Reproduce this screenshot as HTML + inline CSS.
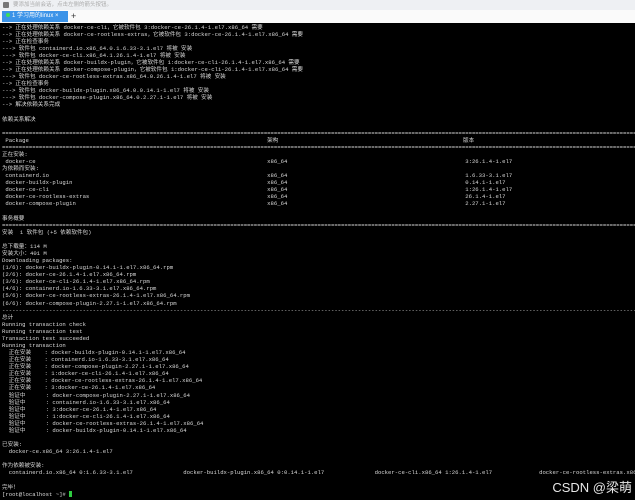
<!DOCTYPE html>
<html><head><meta charset="utf-8"><style>
html,body{margin:0;padding:0;width:635px;height:500px;overflow:hidden;background:#000;}
.top{position:absolute;left:0;top:0;width:635px;height:10px;background:#eef0f3;}
.top .ic{position:absolute;left:3px;top:2px;width:6px;height:6px;background:#777;border-radius:1px;}
.top .t{position:absolute;left:13px;top:1px;font:5.5px "Liberation Sans","Noto Sans CJK SC",sans-serif;color:#aaa;line-height:8px;white-space:nowrap;}
.tabs{position:absolute;left:0;top:10px;width:635px;height:13px;background:#fafafa;}
.tab{position:absolute;left:2px;top:1px;width:66px;height:11px;background:#3b93e8;color:#fff;font:6px "Liberation Sans","Noto Sans CJK SC",sans-serif;line-height:11px;white-space:nowrap;}
.tab .d{display:inline-block;width:4px;height:4px;border-radius:50%;background:#3ddc5a;margin:0 2px 0 4px;vertical-align:middle;}
.plus{position:absolute;left:71px;top:10px;font:9px "Liberation Sans",sans-serif;color:#333;line-height:13px;}
pre{position:absolute;left:2px;top:23.5px;margin:0;font-family:"Liberation Mono","Noto Sans CJK SC",monospace;font-size:5.6px;line-height:7.08px;color:#d8d8d8;white-space:pre;}
.cur{display:inline-block;width:3px;height:6px;background:#2ecc40;vertical-align:middle;}
.wm{position:absolute;right:3px;bottom:4px;font:13px "Liberation Sans","Noto Sans CJK SC",sans-serif;color:#e6e6e6;}
</style></head><body>
<div class="top"><div class="ic"></div><div class="t">要添加当前会话，点击左侧的箭头按钮。</div></div>
<div class="tabs"><div class="tab"><span class="d"></span>1 学习用的linux ×</div></div>
<div class="plus">+</div>
<pre>--&gt; 正在处理依赖关系 docker-ce-cli，它被软件包 3:docker-ce-26.1.4-1.el7.x86_64 需要
--&gt; 正在处理依赖关系 docker-ce-rootless-extras，它被软件包 3:docker-ce-26.1.4-1.el7.x86_64 需要
--&gt; 正在检查事务
---&gt; 软件包 containerd.io.x86_64.0.1.6.33-3.1.el7 将被 安装
---&gt; 软件包 docker-ce-cli.x86_64.1.26.1.4-1.el7 将被 安装
--&gt; 正在处理依赖关系 docker-buildx-plugin，它被软件包 1:docker-ce-cli-26.1.4-1.el7.x86_64 需要
--&gt; 正在处理依赖关系 docker-compose-plugin，它被软件包 1:docker-ce-cli-26.1.4-1.el7.x86_64 需要
---&gt; 软件包 docker-ce-rootless-extras.x86_64.0.26.1.4-1.el7 将被 安装
--&gt; 正在检查事务
---&gt; 软件包 docker-buildx-plugin.x86_64.0.0.14.1-1.el7 将被 安装
---&gt; 软件包 docker-compose-plugin.x86_64.0.2.27.1-1.el7 将被 安装
--&gt; 解决依赖关系完成

依赖关系解决

==============================================================================================================================================================================================
 Package                                                                       架构                                                       版本
==============================================================================================================================================================================================
正在安装:
 docker-ce                                                                     x86_64                                                     3:26.1.4-1.el7
为依赖而安装:
 containerd.io                                                                 x86_64                                                     1.6.33-3.1.el7
 docker-buildx-plugin                                                          x86_64                                                     0.14.1-1.el7
 docker-ce-cli                                                                 x86_64                                                     1:26.1.4-1.el7
 docker-ce-rootless-extras                                                     x86_64                                                     26.1.4-1.el7
 docker-compose-plugin                                                         x86_64                                                     2.27.1-1.el7

事务概要
==============================================================================================================================================================================================
安装  1 软件包 (+5 依赖软件包)

总下载量：114 M
安装大小：401 M
Downloading packages:
(1/6): docker-buildx-plugin-0.14.1-1.el7.x86_64.rpm
(2/6): docker-ce-26.1.4-1.el7.x86_64.rpm
(3/6): docker-ce-cli-26.1.4-1.el7.x86_64.rpm
(4/6): containerd.io-1.6.33-3.1.el7.x86_64.rpm
(5/6): docker-ce-rootless-extras-26.1.4-1.el7.x86_64.rpm
(6/6): docker-compose-plugin-2.27.1-1.el7.x86_64.rpm
----------------------------------------------------------------------------------------------------------------------------------------------------------------------------------------------
总计
Running transaction check
Running transaction test
Transaction test succeeded
Running transaction
  正在安装    : docker-buildx-plugin-0.14.1-1.el7.x86_64
  正在安装    : containerd.io-1.6.33-3.1.el7.x86_64
  正在安装    : docker-compose-plugin-2.27.1-1.el7.x86_64
  正在安装    : 1:docker-ce-cli-26.1.4-1.el7.x86_64
  正在安装    : docker-ce-rootless-extras-26.1.4-1.el7.x86_64
  正在安装    : 3:docker-ce-26.1.4-1.el7.x86_64
  验证中      : docker-compose-plugin-2.27.1-1.el7.x86_64
  验证中      : containerd.io-1.6.33-3.1.el7.x86_64
  验证中      : 3:docker-ce-26.1.4-1.el7.x86_64
  验证中      : 1:docker-ce-cli-26.1.4-1.el7.x86_64
  验证中      : docker-ce-rootless-extras-26.1.4-1.el7.x86_64
  验证中      : docker-buildx-plugin-0.14.1-1.el7.x86_64

已安装:
  docker-ce.x86_64 3:26.1.4-1.el7

作为依赖被安装:
  containerd.io.x86_64 0:1.6.33-3.1.el7               docker-buildx-plugin.x86_64 0:0.14.1-1.el7               docker-ce-cli.x86_64 1:26.1.4-1.el7              docker-ce-rootless-extras.x86_64

完毕！
[root@localhost ~]# <span class="cur"></span></pre>
<div class="wm">CSDN @梁萌</div>
</body></html>
